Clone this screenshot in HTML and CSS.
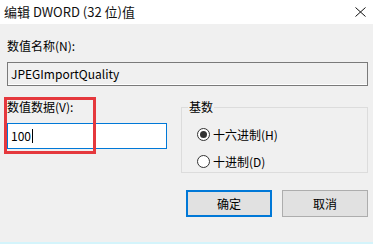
FILE: index.html
```html
<!DOCTYPE html>
<html lang="zh-CN">
<head>
<meta charset="utf-8">
<title>编辑 DWORD (32 位)值</title>
<link rel="stylesheet" href="styles.css">
</head>
<body>
<div class="dialog">
  <div class="titlebar">
    <span class="title">编辑 DWORD (32 位)值</span>
    <svg class="close" width="11" height="10" viewBox="0 0 11 10"><path d="M0.5 0.5 L10.5 9.5 M10.5 0.5 L0.5 9.5" stroke="#111" stroke-width="1" fill="none"/></svg>
  </div>
  <div class="main">
    <div class="label name-label">数值名称(N):</div>
    <div class="field readonly">JPEGImportQuality</div>
    <div class="row">
      <div class="left">
        <div class="label">数值数据(V):</div>
        <div class="field value">100<span class="caret"></span></div>
      </div>
      <fieldset class="group">
        <legend>基数</legend>
        <div class="radio"><span class="dot checked"></span><span>十六进制(H)</span></div>
        <div class="radio"><span class="dot"></span><span>十进制(D)</span></div>
      </fieldset>
    </div>
    <div class="buttons">
      <div class="btn default">确定</div>
      <div class="btn">取消</div>
    </div>
  </div>
  <div class="highlight"></div>
  <div class="bottomline"></div>
</div>
</body>
</html>
```
FILE: styles.css
```css
html, body {
  margin: 0;
  padding: 0;
}
body {
  width: 373px;
  height: 244px;
  overflow: hidden;
  background: #f0f0f0;
  font-family: "Noto Sans CJK SC", "Noto Sans", sans-serif;
  font-size: 12px;
  color: #000;
}
.dialog {
  position: relative;
  width: 373px;
  height: 244px;
  display: flex;
  flex-direction: column;
}
.titlebar {
  height: 24px;
  background: #fff;
  display: flex;
  align-items: center;
  padding: 0 4px 0 4px;
  flex: none;
}
.title {
  font-size: 13px;
  line-height: 16px;
  color: #111;
}
.close {
  margin-left: auto;
  margin-right: 3px;
  margin-top: -1px;
}
.main {
  padding: 0 5px 0 7px;
  flex: 1;
}
.label {
  line-height: 16px;
  height: 16px;
}
.name-label {
  margin-top: 14px;
}
.field {
  box-sizing: border-box;
  display: flex;
  align-items: center;
  padding-left: 3px;
  line-height: 16px;
}
.readonly {
  margin-top: 8px;
  height: 24px;
  border: 1px solid #7a7a7a;
  background: #f0f0f0;
  box-shadow: inset 0 -1px 0 #fff;
}
.row {
  display: flex;
  margin-top: 13px;
}
.left {
  width: 160px;
  flex: none;
}
.value {
  margin-top: 8px;
  height: 26px;
  border: 1px solid #0078d7;
  background: #fff;
}
.caret {
  display: inline-block;
  width: 1px;
  height: 14px;
  background: #000;
  margin-left: 1px;
}
.group {
  flex: 1;
  margin: 0 0 0 14px;
  padding: 11px 0 0 6px;
  border: 1px solid #dcdcdc;
  height: 74px;
  box-sizing: border-box;
  min-width: 0;
}
.group legend {
  padding: 0 1px 0 1px;
  margin-left: 0;
  line-height: 16px;
  font-size: 12px;
}
.radio {
  display: flex;
  align-items: center;
  height: 16px;
  margin-bottom: 11px;
  margin-left: 9px;
  gap: 3px;
}
.dot {
  box-sizing: border-box;
  width: 13px;
  height: 13px;
  border: 1px solid #333;
  border-radius: 50%;
  background: #fff;
  display: flex;
  align-items: center;
  justify-content: center;
}
.dot.checked::after {
  content: "";
  width: 7px;
  height: 7px;
  border-radius: 50%;
  background: #333;
}
.buttons {
  display: flex;
  justify-content: flex-end;
  gap: 10px;
  margin-top: 17px;
}
.btn {
  box-sizing: border-box;
  width: 86px;
  height: 27px;
  border: 1px solid #adadad;
  background: #e1e1e1;
  display: flex;
  align-items: center;
  justify-content: center;
  line-height: 16px;
}
.btn.default {
  border: 2px solid #0078d7;
}
.highlight {
  position: absolute;
  left: 4px;
  top: 97px;
  width: 92px;
  height: 57px;
  box-sizing: border-box;
  border: 3px solid #e5383d;
}
.bottomline {
  height: 2px;
  background: #d4f4fb;
  flex: none;
}
```
